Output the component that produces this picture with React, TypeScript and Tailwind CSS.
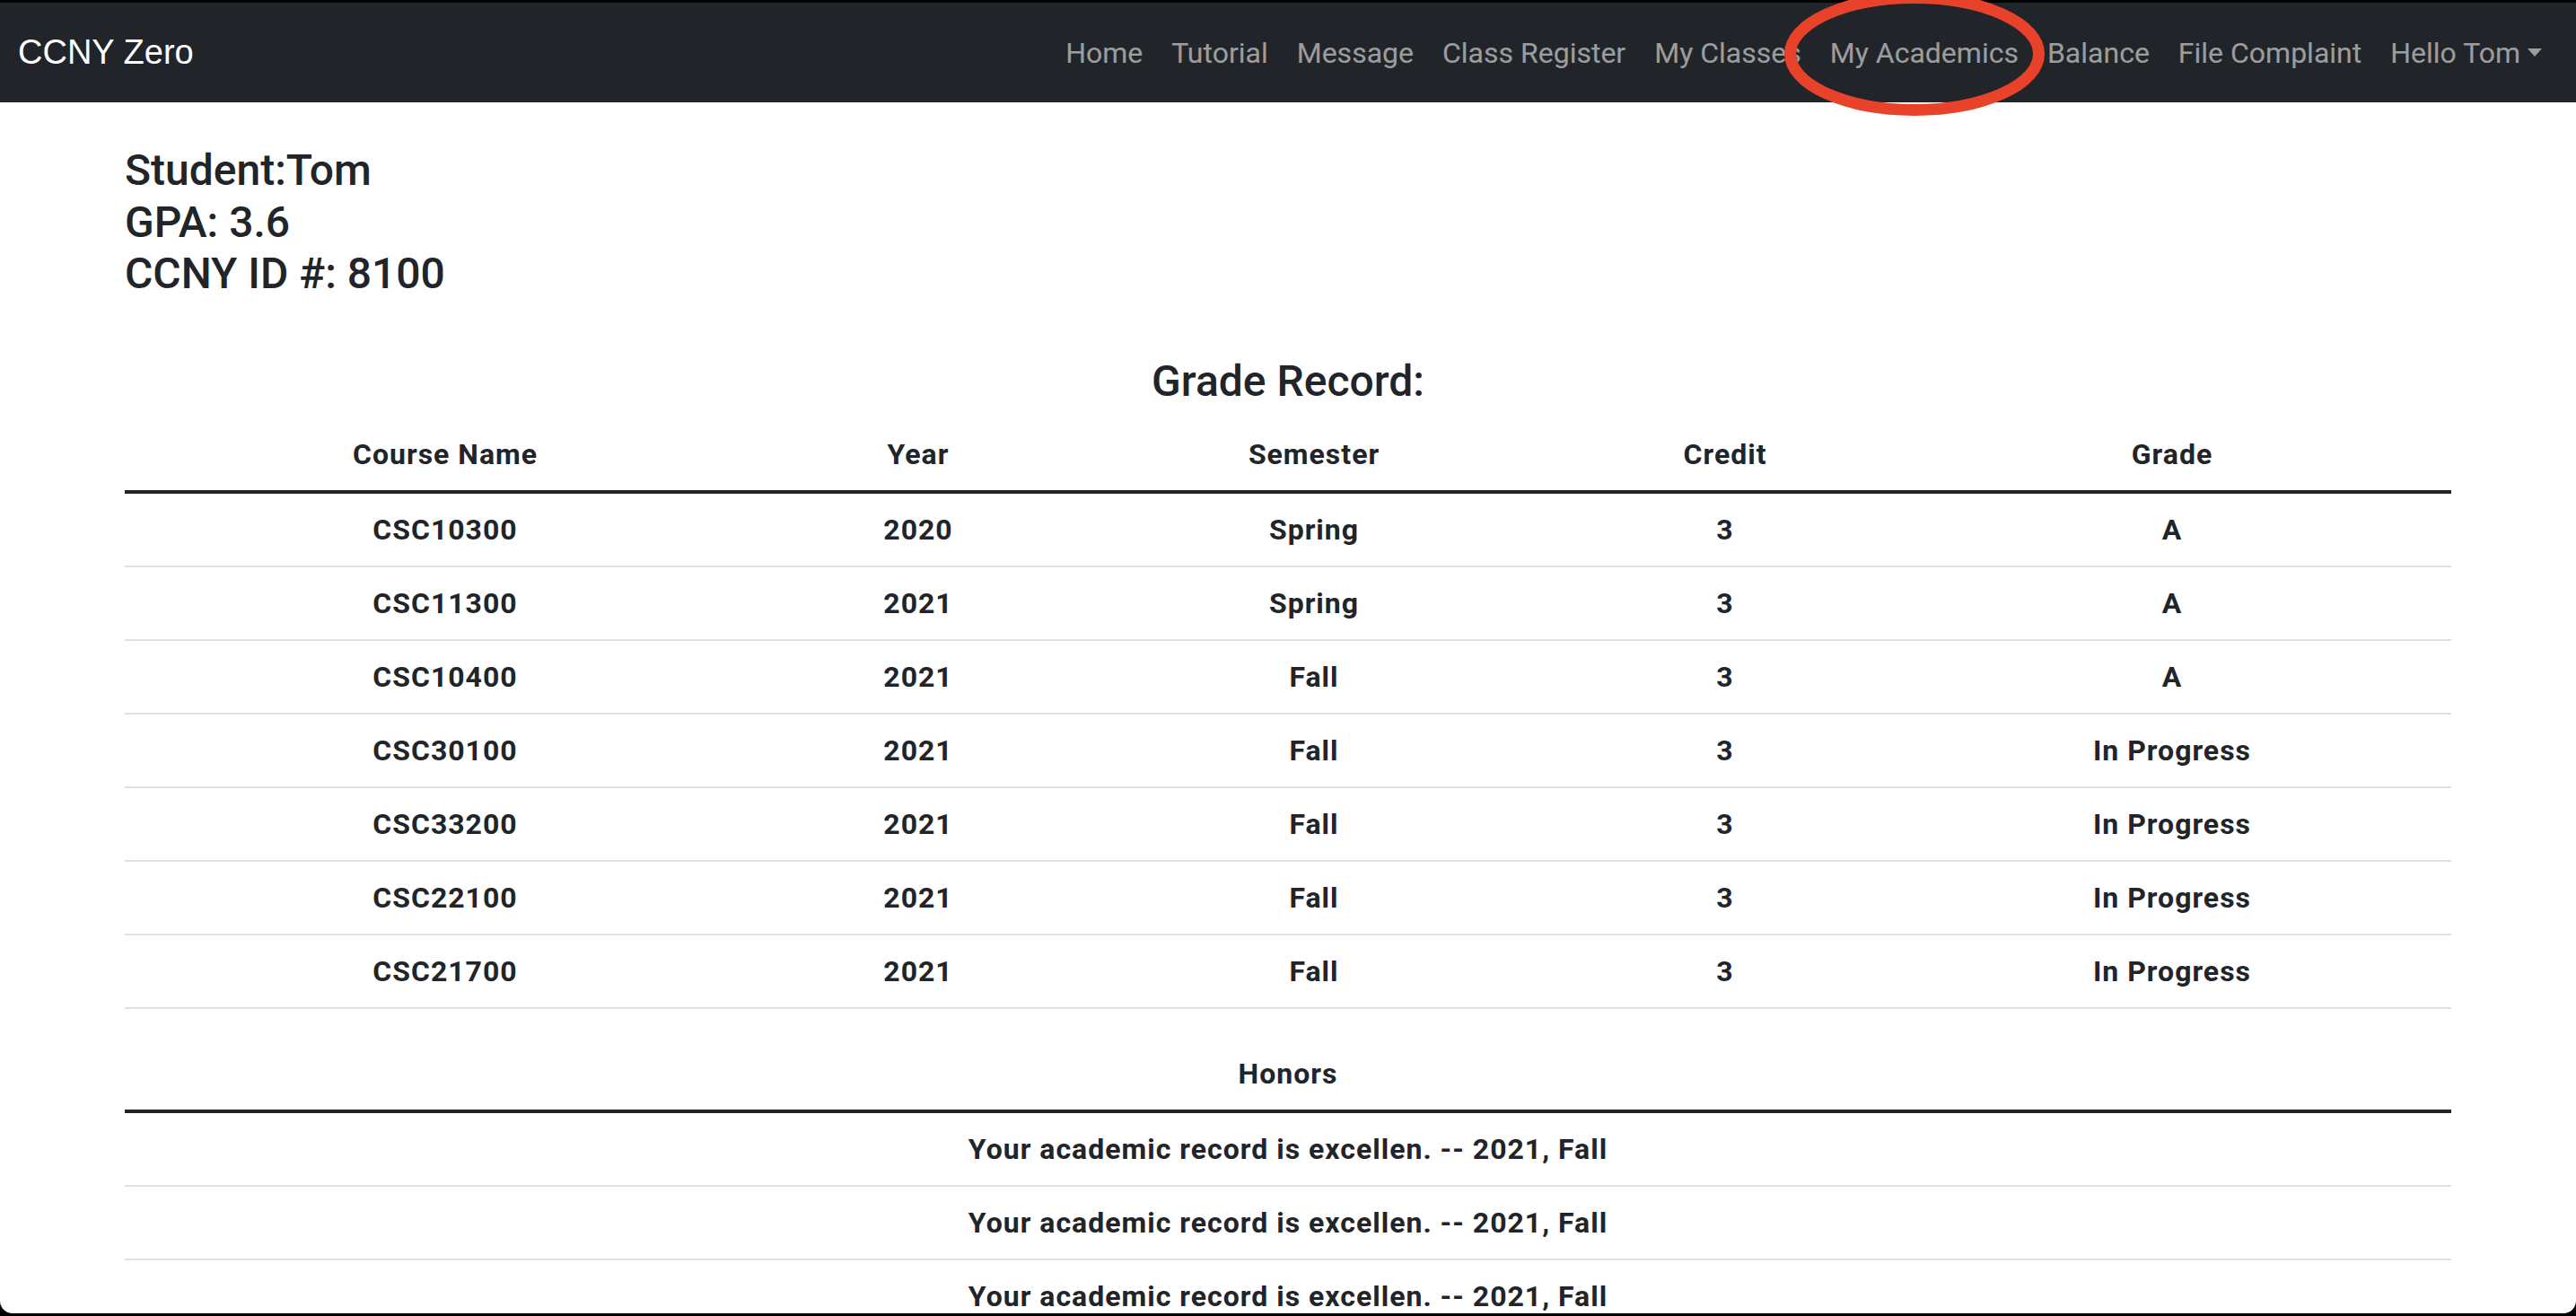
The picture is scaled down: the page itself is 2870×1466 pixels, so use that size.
import React from 'react';

interface GradeRow {
  course: string;
  year: string;
  semester: string;
  credit: string;
  grade: string;
}

const navLinks = ['Home', 'Tutorial', 'Message', 'Class Register', 'My Classes', 'My Academics', 'Balance', 'File Complaint'];

const grades: GradeRow[] = [
  { course: 'CSC10300', year: '2020', semester: 'Spring', credit: '3', grade: 'A' },
  { course: 'CSC11300', year: '2021', semester: 'Spring', credit: '3', grade: 'A' },
  { course: 'CSC10400', year: '2021', semester: 'Fall', credit: '3', grade: 'A' },
  { course: 'CSC30100', year: '2021', semester: 'Fall', credit: '3', grade: 'In Progress' },
  { course: 'CSC33200', year: '2021', semester: 'Fall', credit: '3', grade: 'In Progress' },
  { course: 'CSC22100', year: '2021', semester: 'Fall', credit: '3', grade: 'In Progress' },
  { course: 'CSC21700', year: '2021', semester: 'Fall', credit: '3', grade: 'In Progress' },
];

const honors = [
  'Your academic record is excellen. -- 2021, Fall',
  'Your academic record is excellen. -- 2021, Fall',
  'Your academic record is excellen. -- 2021, Fall',
];

const th = 'py-[16px] px-[16px] leading-[48px] font-bold tracking-[1px] text-center border-b-[4px] border-[#212529]';
const td = 'py-[16px] px-[16px] leading-[48px] font-bold tracking-[1px] text-center border-b-2 border-[#dee2e6]';

export default function App() {
  return (
    <div className="relative h-[1466px] w-full overflow-hidden bg-black pt-[3px] pb-[3px] font-['Roboto',sans-serif] text-[#212529]">
      <div className="h-full overflow-hidden rounded-b-[14px] bg-white">
        {/* Navbar */}
        <nav className="flex h-[111px] items-center bg-[#212529] pl-[20px] pr-[22px]">
          <span className="font-['Liberation_Sans',Arial,sans-serif] text-[38px] text-white">CCNY Zero</span>
          <ul className="ml-auto flex items-center text-[32px] text-white/55">
            {navLinks.map((link) => (
              <li key={link} className="px-[16px]">{link}</li>
            ))}
            <li className="flex items-center px-[16px]">
              Hello Tom
              <span className="ml-[8px] inline-block h-0 w-0 border-x-[8px] border-t-[9px] border-x-transparent border-t-white/55" />
            </li>
          </ul>
        </nav>

        {/* Content */}
        <div className="mx-auto w-[2592px]">
          <div className="mt-[47px] text-[48px] font-medium leading-[57.6px]">
            <div>Student:Tom</div>
            <div>GPA: 3.6</div>
            <div>CCNY ID #: 8100</div>
          </div>

          <h4 className="mt-[62px] mb-[13px] text-center text-[48px] font-medium leading-[57.6px]">Grade Record:</h4>

          <table className="mb-[32px] w-full border-collapse text-[32px]">
            <colgroup>
              <col className="w-[714px]" />
              <col className="w-[340px]" />
              <col className="w-[542px]" />
              <col className="w-[374px]" />
              <col className="w-[622px]" />
            </colgroup>
            <thead>
              <tr>
                <th className={th}>Course Name</th>
                <th className={th}>Year</th>
                <th className={th}>Semester</th>
                <th className={th}>Credit</th>
                <th className={th}>Grade</th>
              </tr>
            </thead>
            <tbody>
              {grades.map((g) => (
                <tr key={g.course}>
                  <td className={td}>{g.course}</td>
                  <td className={td}>{g.year}</td>
                  <td className={td}>{g.semester}</td>
                  <td className={td}>{g.credit}</td>
                  <td className={td}>{g.grade}</td>
                </tr>
              ))}
            </tbody>
          </table>

          <table className="w-full border-collapse text-[32px]">
            <thead>
              <tr>
                <th className={th}>Honors</th>
              </tr>
            </thead>
            <tbody>
              {honors.map((h, i) => (
                <tr key={i}>
                  <td className={td}>{h}</td>
                </tr>
              ))}
            </tbody>
          </table>
        </div>
      </div>

      {/* hand-drawn highlight around "My Academics" */}
      <svg className="pointer-events-none absolute left-0 top-0" width="2870" height="200" viewBox="0 0 2870 200">
        <ellipse cx="2133" cy="60" rx="138.5" ry="62.5" fill="none" stroke="#e9422a" strokeWidth="13" />
      </svg>
    </div>
  );
}
